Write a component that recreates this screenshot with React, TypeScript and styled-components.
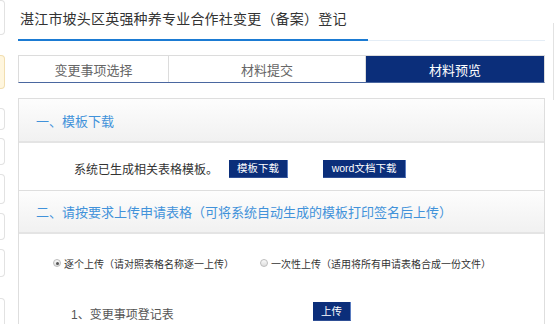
import styled, { createGlobalStyle } from "styled-components";

const GlobalStyle = createGlobalStyle`
    body {
        margin: 0;
        background: #fff;
        font-family: "Liberation Sans", "Noto Sans CJK SC", sans-serif;
        color: #333;
    }
`;

const Page = styled.div`
    display: flex;
    align-items: flex-start;
    width: 554px;
    height: 324px;
    overflow: hidden;
`;

const SideBar = styled.div`
    width: 5px;
    flex-shrink: 0;
    display: flex;
    flex-direction: column;
`;

const SideItem = styled.div<{ $active?: boolean; $h: number; $gap: number }>`
    height: ${(p) => p.$h}px;
    margin-bottom: ${(p) => p.$gap}px;
    box-sizing: border-box;
    border: 1px solid ${(p) => (p.$active ? "#f1deb0" : "#e2e2e2")};
    border-left: none;
    border-radius: 0 4px 4px 0;
    background: ${(p) => (p.$active ? "#fff6de" : "#fff")};
`;

const Main = styled.div`
    margin-left: 13px;
    width: 527px;
    flex-shrink: 0;
`;

const TitleBar = styled.div`
    display: flex;
    border-bottom: 1px solid #e4edf6;
`;

const Title = styled.h1`
    margin: 0 0 -1px;
    padding: 9px 0 10px 2px;
    width: 350px;
    box-sizing: border-box;
    border-bottom: 2px solid #1b7bd3;
    font-size: 14px;
    line-height: 20px;
    font-weight: normal;
    letter-spacing: 0.2px;
    color: #333;
    white-space: nowrap;
`;

const Tabs = styled.div`
    display: flex;
    margin-top: 14px;
    height: 28px;
    border: 1px solid #dcdcdc;
    border-bottom: 1px solid #4a67a0;
    box-sizing: border-box;
`;

const Tab = styled.div<{ $w: number; $active?: boolean }>`
    width: ${(p) => p.$w}px;
    flex-shrink: 0;
    display: flex;
    align-items: center;
    justify-content: center;
    font-size: 13px;
    color: ${(p) => (p.$active ? "#fff" : "#666")};
    background: ${(p) => (p.$active ? "#0b2e7a" : "#fff")};
    border-right: 1px solid #dcdcdc;
    &:last-child {
        border-right: none;
        flex: 1;
    }
`;

const Panel = styled.div`
    margin-top: 15px;
    border: 1px solid #dedede;
    border-bottom: none;
    height: 240px;
`;

const SectionHead = styled.div<{ $h: number }>`
    height: ${(p) => p.$h}px;
    box-sizing: border-box;
    display: flex;
    align-items: center;
    padding-left: 17px;
    background: linear-gradient(#fdfdfd, #f1f1f1);
    border-bottom: 2px solid #e4e4e4;
    font-size: 13px;
    color: #4192da;
    white-space: nowrap;
`;

const DownloadBody = styled.div`
    height: 48px;
    box-sizing: border-box;
    display: flex;
    align-items: center;
    padding: 4px 0 0 55px;
    border-bottom: 1px solid #dedede;
`;

const Note = styled.span`
    font-size: 12px;
    color: #333;
    margin-right: 11px;
`;

const NavyButton = styled.button<{ $w: number; $gap?: number; $h?: number }>`
    width: ${(p) => p.$w}px;
    height: ${(p) => p.$h ?? 18}px;
    margin-right: ${(p) => p.$gap ?? 0}px;
    padding: 0;
    box-sizing: border-box;
    background: #0b2e7a;
    border: none;
    border-right: 1px solid #5a7cc0;
    border-bottom: 1px solid #2f4f95;
    color: #fff;
    font-family: "Liberation Sans", "Noto Sans CJK SC", sans-serif;
    font-size: 10.5px;
    line-height: 17px;
    cursor: pointer;
`;

const UploadBody = styled.div`
    padding: 21px 0 0 34px;
`;

const RadioRow = styled.div`
    display: flex;
    align-items: center;
    height: 16px;
`;

const RadioOption = styled.label<{ $gap?: number }>`
    display: flex;
    align-items: center;
    margin-right: ${(p) => p.$gap ?? 0}px;
    font-size: 10px;
    color: #333;
    white-space: nowrap;
`;

const RadioDot = styled.span<{ $checked?: boolean }>`
    position: relative;
    width: 8px;
    height: 8px;
    margin-right: 3px;
    box-sizing: border-box;
    border: 1px solid #bdbdbd;
    border-radius: 50%;
    background: linear-gradient(#fafafa, #dedede);
    &::after {
        content: "";
        display: ${(p) => (p.$checked ? "block" : "none")};
        position: absolute;
        left: 1.5px;
        top: 1.5px;
        width: 3px;
        height: 3px;
        border-radius: 50%;
        background: #555;
    }
`;

const FileRow = styled.div`
    display: flex;
    align-items: flex-start;
    margin-top: 31px;
    padding-left: 18px;
`;

const FileName = styled.span`
    width: 242px;
    padding-top: 4px;
    font-size: 12px;
    line-height: 18px;
    color: #555;
`;

const RightEdge = styled.div`
    margin: 23px 0 0 8px;
    width: 10px;
    height: 77px;
    border-left: 1px solid #e2e2e2;
`;

const sideItems = [
    { h: 35, gap: 20 },
    { h: 34, gap: 19, active: true },
    { h: 22, gap: 8 },
    { h: 27, gap: 9 },
    { h: 30, gap: 9 },
    { h: 27, gap: 9 },
    { h: 28, gap: 21 },
    { h: 40, gap: 0 },
];

const App = () => {
    return (
        <>
            <GlobalStyle />
            <Page>
                <SideBar>
                    {sideItems.map((s, i) => (
                        <SideItem key={i} $h={s.h} $gap={s.gap} $active={s.active} />
                    ))}
                </SideBar>
                <Main>
                    <TitleBar>
                        <Title>湛江市坡头区英强种养专业合作社变更（备案）登记</Title>
                    </TitleBar>
                    <Tabs>
                        <Tab $w={149}>变更事项选择</Tab>
                        <Tab $w={196}>材料提交</Tab>
                        <Tab $w={180} $active>
                            材料预览
                        </Tab>
                    </Tabs>
                    <Panel>
                        <SectionHead $h={44}>一、模板下载</SectionHead>
                        <DownloadBody>
                            <Note>系统已生成相关表格模板。</Note>
                            <NavyButton $w={59} $gap={35}>模板下载</NavyButton>
                            <NavyButton $w={83}>word文档下载</NavyButton>
                        </DownloadBody>
                        <SectionHead $h={43}>
                            二、请按要求上传申请表格（可将系统自动生成的模板打印签名后上传）
                        </SectionHead>
                        <UploadBody>
                            <RadioRow>
                                <RadioOption $gap={26}>
                                    <RadioDot $checked />
                                    逐个上传（请对照表格名称逐一上传）
                                </RadioOption>
                                <RadioOption>
                                    <RadioDot />
                                    一次性上传（适用将所有申请表格合成一份文件）
                                </RadioOption>
                            </RadioRow>
                            <FileRow>
                                <FileName>1、变更事项登记表</FileName>
                                <NavyButton $w={38} $h={19}>上传</NavyButton>
                            </FileRow>
                        </UploadBody>
                    </Panel>
                </Main>
                <RightEdge />
            </Page>
        </>
    );
};

export default App;
